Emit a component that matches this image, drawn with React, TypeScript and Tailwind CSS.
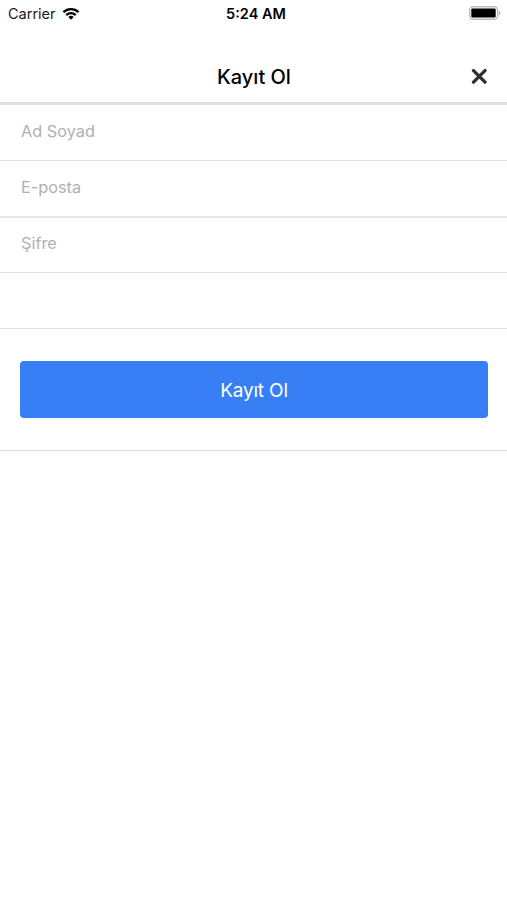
const fields = [
  { label: 'Ad Soyad', type: 'text', row: 'h-14 pb-[3px] border-b border-[#dedede]' },
  { label: 'E-posta', type: 'email', row: 'h-[57px] pb-[3px] border-b-2 border-[#e6e6e6]' },
  { label: 'Şifre', type: 'password', row: 'h-[55px] pb-[3px] border-b border-[#dedede]' },
]

function StatusBar() {
  return (
    <div className="grid h-7 grid-cols-3 items-center pl-2 pr-[5px] text-black">
      <div className="flex items-center gap-[6px]">
        <span className="text-[14.5px] leading-7 text-[#1c1c1c]">Carrier</span>
        <svg className="mb-[2px] h-[13px] w-[18px]" viewBox="0 0 18 13" fill="none" stroke="currentColor" strokeWidth="2.3">
          <path d="M1.4 5.1a11 11 0 0 1 15.2 0" />
          <path d="M4.3 8.1a6.8 6.8 0 0 1 9.4 0" />
          <path d="M9 12.8 6.3 10a3.9 3.9 0 0 1 5.4 0z" fill="currentColor" stroke="none" />
        </svg>
      </div>
      <span className="pl-[2px] text-center text-[14.5px] font-semibold leading-7">5:24 AM</span>
      <svg className="mb-[2px] h-[14px] w-[33px] justify-self-end" viewBox="0 0 33 14">
        <rect x="0.7" y="0.7" width="28" height="12.6" rx="3.5" fill="#fff" stroke="#bcbcbc" strokeWidth="1.4" />
        <rect x="2.3" y="2.5" width="24.4" height="9" rx="1.2" fill="#000" />
        <path d="M30 5c1.8.7 1.8 3.3 0 4z" fill="#a3a3a3" />
      </svg>
    </div>
  )
}

export default function App() {
  return (
    <div className="min-h-screen bg-white font-['Inter',sans-serif]">
      <StatusBar />

      {/* Header */}
      <header className="grid h-[77px] grid-cols-[1fr_auto_1fr] items-center border-b-[3px] border-[#dedede] pl-[21px] pr-5 pt-[23px]">
        <h1 className="col-start-2 text-[20px] font-medium text-black">Kayıt Ol</h1>
        <button className="justify-self-end" aria-label="Kapat">
          <svg className="h-4 w-4" viewBox="0 0 16 16" stroke="#303030" strokeWidth="3.4" strokeLinecap="round">
            <path d="M2.5 1.6l11.5 11.5M14 1.6L2.5 13.1" />
          </svg>
        </button>
      </header>

      {/* Form */}
      <form>
        {fields.map((field) => (
          <div key={field.label} className={`flex items-center px-[21px] ${field.row}`}>
            <input
              type={field.type}
              placeholder={field.label}
              className="w-full text-[16.3px] outline-none placeholder:text-[#b0b0b0]"
            />
          </div>
        ))}
        <div className="h-14 border-b border-[#dedede]" />
        <div className="border-b border-[#dedede] py-8 pl-5 pr-[19px]">
          <button type="button" className="h-[57px] w-full rounded bg-[#387ef5] pt-[4px] text-[19px] tracking-[-0.01em] text-white">
            Kayıt Ol
          </button>
        </div>
      </form>
    </div>
  )
}
